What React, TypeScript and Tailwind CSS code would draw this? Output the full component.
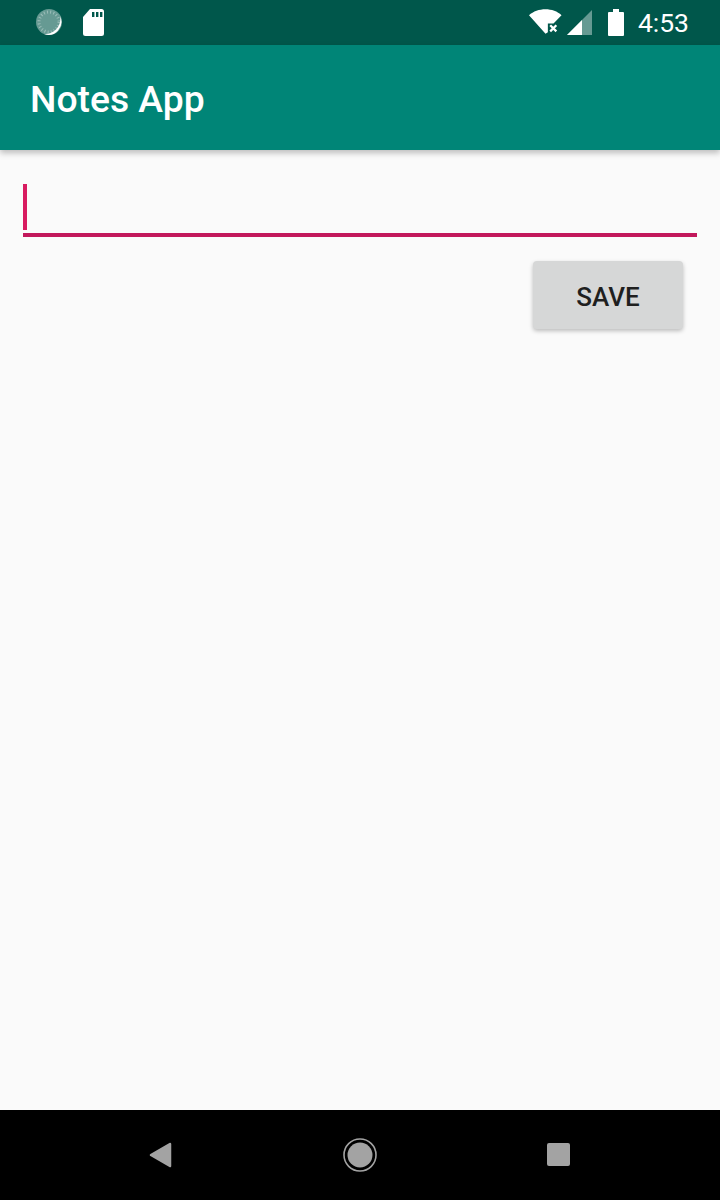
function StatusBar() {
  return (
    <div className="flex h-[45px] items-center bg-[#00574b] pl-[35px] pr-[31px]">
      <svg width="28" height="28" viewBox="0 0 28 28" className="mb-[2px]">
        <circle cx="14" cy="14" r="13" fill="#ffffff" fillOpacity="0.4" />
        <path d="M25 8A13 13 0 0 1 9 26A15 15 0 0 0 25 8z" fill="#ffffff" />
        <circle cx="14" cy="14" r="10" fill="none" stroke="#ffffff" strokeOpacity="0.35" strokeWidth="3" strokeDasharray="1 2.2" />
      </svg>
      <svg width="21" height="27" viewBox="0 0 21 27" className="ml-[20px]">
        <path
          d="M7 0H18.5a2.5 2.5 0 0 1 2.5 2.5V24.5a2.5 2.5 0 0 1 -2.5 2.5H2.5a2.5 2.5 0 0 1 -2.5 -2.5V8z"
          fill="#ffffff"
        />
        <rect x="9" y="3" width="2.4" height="5" fill="#00574b" />
        <rect x="13" y="3" width="2.4" height="5" fill="#00574b" />
        <rect x="17" y="3" width="2.4" height="5" fill="#00574b" />
      </svg>
      <div className="flex-1" />
      <svg width="33" height="25" viewBox="0 0 35 26" className="mb-[3px]">
        <path d="M0 6.5C9 -2 26 -2 34.5 6.5L26 15H20V24.5L17.5 26z" fill="#ffffff" />
        <path
          d="M22.5 17L29 23.5M29 17L22.5 23.5"
          stroke="#ffffff"
          strokeWidth="2.4"
          fill="none"
        />
      </svg>
      <svg width="25" height="25" viewBox="0 0 25 25" className="mb-[1px] ml-[5px]">
        <path d="M0 25L25 0V25z" fill="#ffffff" fillOpacity="0.4" />
        <path d="M0 25L15 10V25z" fill="#ffffff" />
      </svg>
      <svg width="16" height="27" viewBox="0 0 16 27" className="mb-[1px] ml-[16px]">
        <path d="M5 0H11V3H15a1 1 0 0 1 1 1V26a1 1 0 0 1 -1 1H1a1 1 0 0 1 -1 -1V4a1 1 0 0 1 1 -1H5z" fill="#ffffff" />
      </svg>
      <span className="ml-[14px] pt-[2px] font-['Roboto',sans-serif] text-[26.5px] leading-none text-white">
        4:53
      </span>
    </div>
  );
}

function NavBar() {
  return (
    <div className="flex h-[90px] items-center justify-center bg-black pb-[1px] pr-[2px]">
      <svg width="24" height="26" viewBox="0 0 24 26" className="mr-[171px]">
        <path
          d="M22 2L3 13L22 24z"
          fill="#a3a3a3"
          stroke="#a3a3a3"
          strokeWidth="2.5"
          strokeLinejoin="round"
        />
      </svg>
      <svg width="34" height="34" viewBox="0 0 34 34">
        <circle cx="17" cy="17" r="16" fill="none" stroke="#a3a3a3" strokeWidth="1.6" />
        <circle cx="17" cy="17" r="12.5" fill="#a3a3a3" />
      </svg>
      <div className="ml-[170px] h-[23px] w-[23px] rounded-[2px] bg-[#a3a3a3]" />
    </div>
  );
}

export default function App() {
  return (
    <div className="flex h-[1200px] w-[720px] flex-col overflow-hidden bg-[#fafafa] font-['Roboto',sans-serif]">
      <StatusBar />
      <div className="flex h-[105px] items-center bg-[#008577] pl-[30px] pt-[5px] shadow-[0_3px_6px_rgba(0,0,0,0.25)]">
        <h1 className="text-[37.25px] font-medium leading-none text-white">Notes App</h1>
      </div>
      <div className="flex flex-1 flex-col px-[23px] pt-[34px]">
        <div className="h-[53px] border-b-[4px] border-[#c2185b]">
          <div className="h-[46px] w-[4px] bg-[#d81b60]" />
        </div>
        <div className="mt-[24px] flex justify-end pr-[14px]">
          <button className="flex h-[68px] w-[150px] items-center justify-center rounded-[4px] bg-[#d6d7d7] pt-[5px] text-[26px] font-medium text-[#1f1f1f] shadow-[0_2px_4px_rgba(0,0,0,0.25)]">
            SAVE
          </button>
        </div>
      </div>
      <NavBar />
    </div>
  );
}
